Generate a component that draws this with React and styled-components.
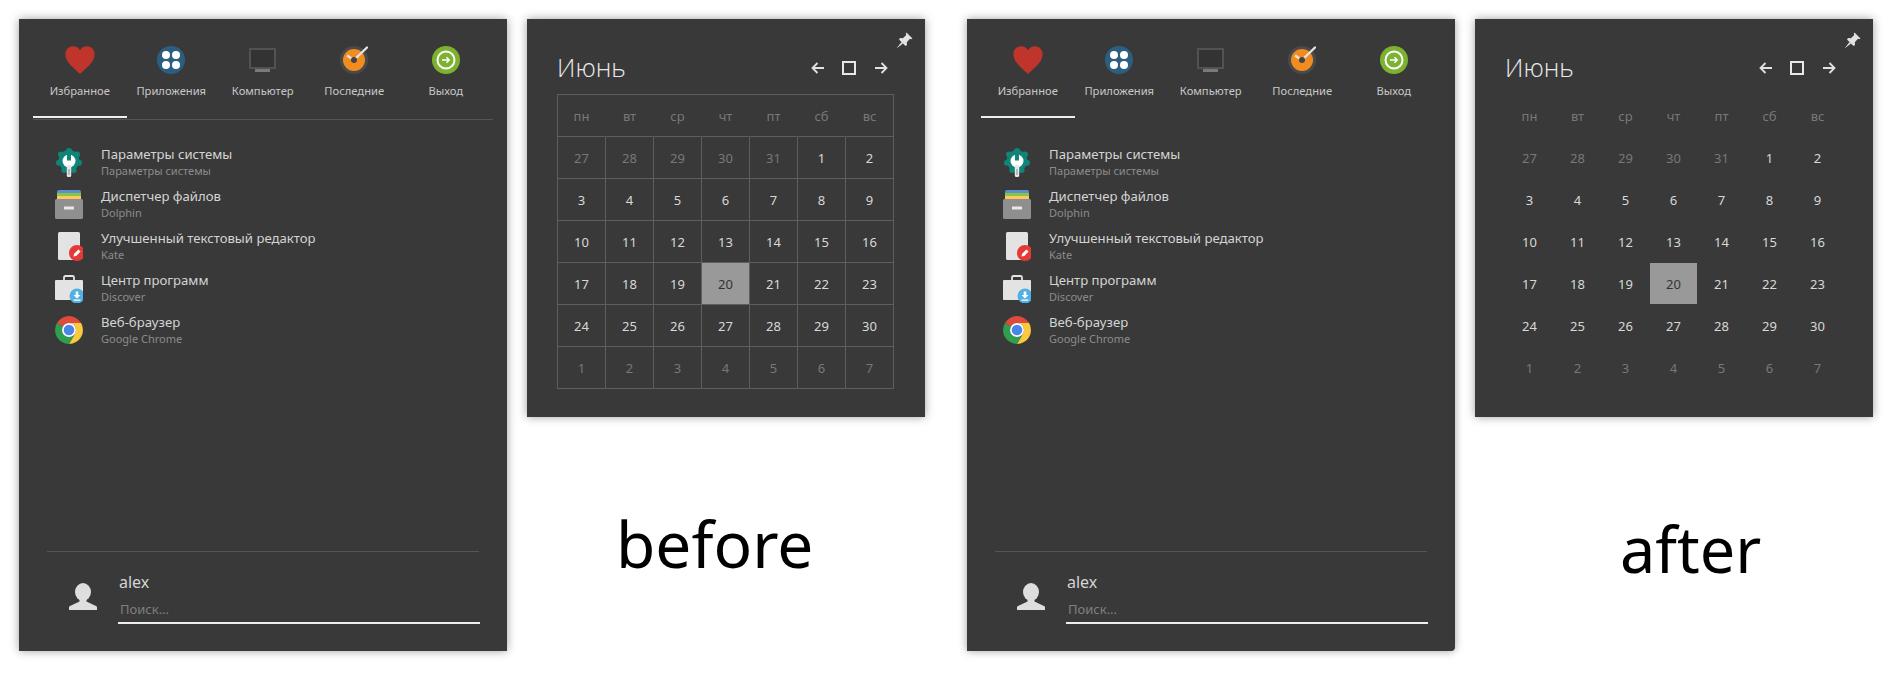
import React from "react";
import styled, { createGlobalStyle } from "styled-components";

const Global = createGlobalStyle`
  html, body { margin: 0; padding: 0; background: #fff; }
  body { font-family: "Noto Sans", "Open Sans", sans-serif; overflow: hidden; }
  * { box-sizing: border-box; }
`;

const Page = styled.div`
  display: flex;
  align-items: flex-start;
  width: 1896px;
  height: 673px;
  padding: 19px 0 0 19px;
`;
const Group = styled.div`
  display: flex;
  gap: 20px;
  margin-right: 42px;
`;
const Panel = styled.div`
  background: #393939;
  box-shadow: 0 0 9px rgba(0, 0, 0, 0.38);
`;
const MenuPanel = styled(Panel)`
  width: 488px;
  height: 632px;
  display: flex;
  flex-direction: column;
  border-bottom-right-radius: ${(p) => (p.$rounded ? "4px" : "0")};
`;
const Tabs = styled.div`
  position: relative;
  display: grid;
  grid-template-columns: repeat(5, 91.5px);
  height: 101px;
  margin: 0 14px;
  padding: 27px 0 0 1px;
  border-bottom: 1px solid ${(p) => (p.$divider ? "#555555" : "transparent")};
`;
const Tab = styled.div`
  display: flex;
  flex-direction: column;
  align-items: center;
  height: 64px;
`;
const TabLabel = styled.div`
  margin-top: 9px;
  font-size: 11.2px;
  line-height: 16px;
  color: #c8c8c8;
  white-space: nowrap;
`;
const ActiveLine = styled.div`
  position: absolute;
  left: 0;
  bottom: 1px;
  width: 94px;
  height: 2px;
  background: #eeeeee;
`;
const AppList = styled.div`
  display: flex;
  flex-direction: column;
  margin-top: 21px;
  padding-left: 36px;
  flex: 1;
`;
const AppRow = styled.div`
  display: flex;
  align-items: center;
  height: 42px;
  gap: 18px;
`;
const AppText = styled.div`
  display: flex;
  flex-direction: column;
  margin-bottom: 2px;
`;
const AppTitle = styled.div`
  font-size: 13.15px;
  line-height: 18px;
  color: #d4d4d4;
  white-space: nowrap;
`;
const AppSub = styled.div`
  font-size: 11px;
  line-height: 15px;
  color: #8c8c8c;
  white-space: nowrap;
`;
const Footer = styled.div`
  display: flex;
  margin: 0 28px;
  height: 100px;
  border-top: 1px solid #555555;
  padding: 20px 0 0 22px;
  gap: 21px;
`;
const FooterBody = styled.div`
  display: flex;
  flex-direction: column;
  flex: 1;
  margin-right: -1px;
`;
const UserName = styled.div`
  margin-left: 1px;
  font-size: 16px;
  line-height: 20px;
  color: #d4d4d4;
`;
const Search = styled.div`
  margin-top: 4px;
  height: 28px;
  padding: 4px 2px 0;
  font-size: 13px;
  line-height: 18px;
  color: #808080;
  border-bottom: 2px solid #eeeeee;
`;
const AvatarWrap = styled.div`
  width: 28px;
  height: 28px;
  margin-top: 11px;
`;
const CalendarColumn = styled.div`
  display: flex;
  flex-direction: column;
`;
const CalendarPanel = styled(Panel)`
  position: relative;
  width: 398px;
  height: 398px;
  padding: 30px 31px 0 30px;
`;
const PinWrap = styled.div`
  position: absolute;
  top: 13px;
  right: 12px;
  width: 17px;
  height: 17px;
`;
const CalHeader = styled.div`
  display: flex;
  align-items: center;
  justify-content: space-between;
  height: 38px;
  margin: 0 -3px 7px 0;
`;
const Month = styled.div`
  margin-bottom: 2px;
  font-family: "Open Sans", "Noto Sans", sans-serif;
  font-weight: 300;
  font-size: 25.5px;
  line-height: 38px;
  color: #e8e8e8;
`;
const Controls = styled.div`
  display: flex;
`;
const Control = styled.div`
  width: 32px;
  height: 20px;
  display: flex;
  align-items: center;
  justify-content: center;
`;
const Grid = styled.div`
  display: grid;
  grid-template-columns: repeat(7, 48px);
  grid-auto-rows: 42px;
  width: 337px;
  border-left: 1px solid ${(p) => (p.$lines ? "#5e5e5e" : "transparent")};
  border-top: 1px solid ${(p) => (p.$lines ? "#5e5e5e" : "transparent")};
`;
const Cell = styled.div`
  display: flex;
  align-items: center;
  justify-content: center;
  font-size: 13px;
  background-clip: padding-box;
  color: ${(p) => (p.$today ? "#333333" : p.$muted ? "#787878" : "#d8d8d8")};
  background-color: ${(p) => (p.$today ? "#999999" : "transparent")};
  border-bottom: 1px solid ${(p) => (p.$lines ? "#5e5e5e" : "transparent")};
  border-right: 1px solid
    ${(p) => (p.$lines && (!p.$head || p.$last) ? "#5e5e5e" : "transparent")};
`;
const Caption = styled.div`
  margin: ${(p) => p.$top}px 0 0 ${(p) => p.$left}px;
  font-size: ${(p) => p.$size}px;
  line-height: 76px;
  color: #000;
`;

const Heart = () => (
  <svg width="30" height="28" viewBox="0 0 30 28">
    <path d="M15 28C9 22 .4 16.5.4 8.2.4 3.5 3.800 .2 8 .2c3 0 5.600 1.500 7 4 1.400-2.500 4-4 7-4 4.200 0 7.600 3.300 7.600 8 0 8.300-8.600 13.800-14.600 19.800z" fill="#c0352b" />
  </svg>
);
const Apps = () => (
  <svg width="28" height="28" viewBox="0 0 28 28">
    <circle cx="14" cy="14" r="14" fill="#2c5f7f" />
    <g fill="#fff">
      <circle cx="9" cy="9" r="4" />
      <circle cx="19" cy="9" r="4" />
      <circle cx="9" cy="19" r="4" />
      <circle cx="19" cy="19" r="4" />
    </g>
  </svg>
);
const Computer = () => (
  <svg width="28" height="28" viewBox="0 0 28 28">
    <rect x="1" y="3" width="25" height="19" fill="#333333" stroke="#525252" strokeWidth="2" />
    <rect x="6" y="23" width="15" height="3" fill="#7a7a7a" />
  </svg>
);
const Recent = () => (
  <svg width="28" height="28" viewBox="0 0 28 28">
    <circle cx="14" cy="14" r="14" fill="#4a4a4a" />
    <circle cx="14" cy="14" r="11" fill="#f28c1e" />
    <path d="M14 14L27 1.500" stroke="#e4e4e4" strokeWidth="2.400" strokeLinecap="round" />
    <path d="M14 14L7 9.500" stroke="#e4e4e4" strokeWidth="2.400" />
    <circle cx="14" cy="14" r="3" fill="#444" />
  </svg>
);
const Leave = () => (
  <svg width="28" height="28" viewBox="0 0 28 28">
    <circle cx="14" cy="14" r="14" fill="#7cb22f" />
    <circle cx="14" cy="14" r="8.500" fill="none" stroke="#fff" strokeWidth="2" />
    <path d="M10 14h6.500M14.500 11.300l2.700 2.700-2.700 2.700" fill="none" stroke="#fff" strokeWidth="1.500" />
  </svg>
);
const Gear = () => (
  <svg width="28" height="29" viewBox="0 0 28 29">
    <g fill="#0f8577">
      <circle cx="14" cy="12.500" r="10.500" />
      <circle cx="14" cy="3" r="3" />
      <circle cx="22" cy="6.500" r="3" />
      <circle cx="24" cy="14.800" r="3" />
      <circle cx="18.600" cy="22" r="3" />
      <circle cx="9.400" cy="22" r="3" />
      <circle cx="4" cy="14.800" r="3" />
      <circle cx="6" cy="6.500" r="3" />
    </g>
    <circle cx="14" cy="13" r="6.500" fill="#fff" />
    <path d="M12 3.500h4V12.500h-4z" fill="#0f8577" />
    <rect x="11.800" y="17" width="4.400" height="12" rx="1.500" fill="#e8e8e8" />
    <rect x="13.400" y="21" width="1.200" height="6" fill="#999" />
  </svg>
);
const Folder = () => (
  <svg width="28" height="29" viewBox="0 0 28 29">
    <path d="M2 2a2 2 0 0 1 2-2h20a2 2 0 0 1 2 2v2H2z" fill="#5b8fd0" />
    <rect x="2" y="3" width="24" height="4" fill="#8bc34a" />
    <rect x="2" y="6" width="24" height="4" fill="#fbc95c" />
    <rect x="0" y="9" width="28" height="20" rx="1.500" fill="#8f8f8f" />
    <rect x="9" y="16.500" width="10" height="3" rx=".5" fill="#e8e8e8" />
  </svg>
);
const Kate = () => (
  <svg width="28" height="29" viewBox="0 0 28 29">
    <rect x="3" y="0" width="22" height="28" rx="1.500" fill="#e3e3e3" />
    <circle cx="22" cy="21" r="8" fill="#e53935" />
    <path d="M18.500 24.500l.6-2.800 4.300-4.300 2.200 2.200-4.300 4.300z" fill="#fff" />
  </svg>
);
const Discover = () => (
  <svg width="28" height="29" viewBox="0 0 28 29">
    <path d="M9 6V3.500Q9 2 10.500 2h7Q19 2 19 3.500V6" fill="none" stroke="#e3e3e3" strokeWidth="1.800" />
    <rect x="0" y="6" width="28" height="20" rx="1" fill="#e3e3e3" />
    <circle cx="22" cy="22" r="7.500" fill="#4fb0e3" />
    <path d="M20.700 17.500h2.600v3.500h2.200L22 24.500 18.500 21h2.200zM18.500 25.500h7v1.200h-7z" fill="#fff" />
  </svg>
);
const Chrome = () => (
  <svg width="28" height="28" viewBox="0 0 28 28">
    <path d="M1.900 7A14 14 0 0 1 26.100 7H14A7 7 0 0 0 7.940 10.500z" fill="#de4a3c" />
    <path d="M26.100 7A14 14 0 0 1 14 28L20.060 17.500A7 7 0 0 0 14 7z" fill="#fbc93d" />
    <path d="M14 28A14 14 0 0 1 1.900 7L7.940 10.500A7 7 0 0 0 20.060 17.500z" fill="#2f9e4f" />
    <circle cx="14" cy="14" r="7" fill="#fff" />
    <circle cx="14" cy="14" r="5.300" fill="#4a86e8" />
  </svg>
);
const Avatar = () => (
  <svg width="28" height="28" viewBox="0 0 28 28">
    <ellipse cx="14" cy="9" rx="8" ry="9" fill="#dedede" />
    <path d="M10.500 16v2.500L1 23q-1 .4-1 1.500V27h28v-2.500q0-1.100-1-1.500l-9.500-4.500V16z" fill="#dedede" />
  </svg>
);
const Pin = () => (
  <svg width="17" height="17" viewBox="0 0 17 17">
    <path d="M10.500.500L16.500 6.500 15.200 7.300 14 6.700 10.800 10.200 11 13 9.500 14 3 7.500 4 6 6.800 6.200 10.300 3 9.700 1.800z" fill="#e2e2e2" />
    <path d="M5.500 10L.500 16.500 7 11.500z" fill="#e2e2e2" />
  </svg>
);
const ArrowLeft = () => (
  <svg width="13" height="12" viewBox="0 0 13 12">
    <path d="M13 6H2M6.500 1L1.500 6l5 5" fill="none" stroke="#e2e2e2" strokeWidth="1.800" />
  </svg>
);
const ArrowRight = () => (
  <svg width="13" height="12" viewBox="0 0 13 12">
    <path d="M0 6h11M6.500 1l5 5-5 5" fill="none" stroke="#e2e2e2" strokeWidth="1.800" />
  </svg>
);
const Square = () => (
  <svg width="14" height="14" viewBox="0 0 14 14">
    <rect x="1" y="1" width="12" height="12" fill="none" stroke="#e8e8e8" strokeWidth="2" />
  </svg>
);

const tabs = [
  ["Избранное", Heart],
  ["Приложения", Apps],
  ["Компьютер", Computer],
  ["Последние", Recent],
  ["Выход", Leave],
];
const apps = [
  ["Параметры системы", "Параметры системы", Gear],
  ["Диспетчер файлов", "Dolphin", Folder],
  ["Улучшенный текстовый редактор", "Kate", Kate],
  ["Центр программ", "Discover", Discover],
  ["Веб-браузер", "Google Chrome", Chrome],
];
const weekdays = ["пн", "вт", "ср", "чт", "пт", "сб", "вс"];
const days = [
  ...[27, 28, 29, 30, 31].map((d) => ({ d, muted: true })),
  ...Array.from({ length: 30 }, (_, i) => ({ d: i + 1, today: i + 1 === 20 })),
  ...[1, 2, 3, 4, 5, 6, 7].map((d) => ({ d, muted: true })),
];

const Menu = ({ divider, rounded }) => (
  <MenuPanel $rounded={rounded}>
    <Tabs $divider={divider}>
      {tabs.map(([label, Icon]) => (
        <Tab key={label}>
          <Icon />
          <TabLabel>{label}</TabLabel>
        </Tab>
      ))}
      <ActiveLine />
    </Tabs>
    <AppList>
      {apps.map(([title, sub, Icon]) => (
        <AppRow key={title}>
          <Icon />
          <AppText>
            <AppTitle>{title}</AppTitle>
            <AppSub>{sub}</AppSub>
          </AppText>
        </AppRow>
      ))}
    </AppList>
    <Footer>
      <AvatarWrap>
        <Avatar />
      </AvatarWrap>
      <FooterBody>
        <UserName>alex</UserName>
        <Search>Поиск...</Search>
      </FooterBody>
    </Footer>
  </MenuPanel>
);

const Calendar = ({ lines, caption, left, top, size }) => (
  <CalendarColumn>
    <CalendarPanel>
      <PinWrap>
        <Pin />
      </PinWrap>
      <CalHeader>
        <Month>Июнь</Month>
        <Controls>
          <Control>
            <ArrowLeft />
          </Control>
          <Control>
            <Square />
          </Control>
          <Control>
            <ArrowRight />
          </Control>
        </Controls>
      </CalHeader>
      <Grid $lines={lines}>
        {weekdays.map((w, i) => (
          <Cell key={w} $head $muted $lines={lines} $last={i === 6}>
            {w}
          </Cell>
        ))}
        {days.map((c, i) => (
          <Cell key={i} $lines={lines} $muted={c.muted} $today={c.today}>
            {c.d}
          </Cell>
        ))}
      </Grid>
    </CalendarPanel>
    <Caption $left={left} $top={top} $size={size}>
      {caption}
    </Caption>
  </CalendarColumn>
);

export default function App() {
  return (
    <Page>
      <Global />
      <Group>
        <Menu divider />
        <Calendar lines caption="before" left={89} top={89} size={64} />
      </Group>
      <Group>
        <Menu rounded />
        <Calendar caption="after" left={145} top={94} size={63} />
      </Group>
    </Page>
  );
}
